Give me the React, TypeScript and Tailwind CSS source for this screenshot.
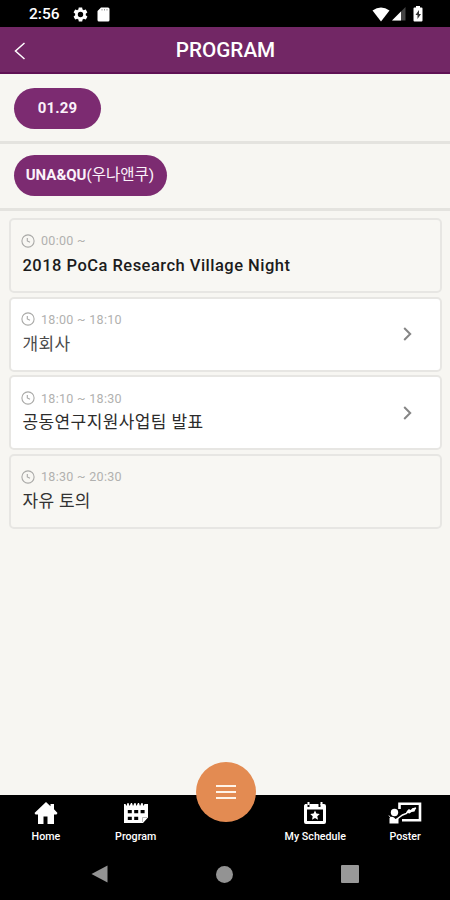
import React from 'react';

type Session = { time: string; title: string; link: boolean; tone: string; spacing: string };

const sessions: Session[] = [
  { time: '00:00 ~', title: '2018 PoCa Research Village Night', link: false, tone: 'text-[#1c1c1c] font-medium', spacing: 'pt-px text-[16.500px] tracking-[0.480px]' },
  { time: '18:00 ~ 18:10', title: '개회사', link: true, tone: 'text-[#4c4c4c]', spacing: 'text-[17px] tracking-[0.4px]' },
  { time: '18:10 ~ 18:30', title: '공동연구지원사업팀 발표', link: true, tone: 'text-[#2c2c2c]', spacing: 'text-[17px] tracking-[0.4px]' },
  { time: '18:30 ~ 20:30', title: '자유 토의', link: false, tone: 'text-[#333333]', spacing: 'text-[17px] tracking-[0.3px]' },
];

function StatusBar() {
  return (
    <div className="flex h-[27px] shrink-0 items-center bg-black pl-[29px] pr-[27px] pt-px text-white">
      <span className="w-[43px] pt-[2px] text-[15.5px] font-medium leading-none">2:56</span>
      <svg className="h-[17px] w-[17px]" viewBox="0 0 24 24" fill="currentColor">
        <path d="M19.4 13a7.5 7.5 0 0 0 0-2l2.1-1.7c.2-.1.3-.4.1-.6l-2-3.5c-.1-.2-.4-.3-.6-.2l-2.5 1a7.300 7.300 0 0 0-1.700-1l-.4-2.600c0-.3-.2-.4-.5-.4h-4c-.2 0-.4.1-.5.4L9 5c-.6.300-1.200.6-1.700 1L4.900 5c-.2-.1-.5 0-.6.2l-2 3.500c-.1.2-.1.5.1.6L4.500 11a7.500 7.500 0 0 0 0 2l-2.100 1.700c-.2.1-.2.4-.1.6l2 3.500c.1.2.4.3.6.2l2.500-1c.5.4 1.100.7 1.700 1l.4 2.600c0 .2.2.4.5.4h4c.2 0 .4-.2.5-.4l.4-2.600c.6-.3 1.200-.6 1.700-1l2.500 1c.2.1.5 0 .6-.2l2-3.500c.1-.2.1-.5-.1-.6L19.400 13ZM12 15.800a3.800 3.800 0 1 1 0-7.600 3.800 3.800 0 0 1 0 7.600Z" />
      </svg>
      <svg className="ml-[8px] h-[15px] w-[13px]" viewBox="0 0 13 15" fill="currentColor">
        <path d="M4 .5h7a1.500 1.500 0 0 1 1.500 1.500v11a1.500 1.500 0 0 1-1.500 1.500H2A1.500 1.500 0 0 1 .5 13V4Z" />
        <path d="M5 2v1.500M7.500 2v1.500M10 2v1.500" stroke="#999" strokeWidth="1" />
      </svg>
      <div className="ml-auto flex items-center">
        <svg className="h-[15px] w-[18px]" viewBox="0 0 18 15" fill="currentColor"><path d="M.5 3.500Q9-2.500 17.500 3.500L9 14.500Z" /></svg>
        <svg className="ml-[2px] h-[14px] w-[14px]" viewBox="0 0 14 14"><path d="M13.500 0V13.500H0Z" fill="#444" /><path d="M9 4.500V13.500H0Z" fill="#fff" /></svg>
        <svg className="ml-[7px] h-[16px] w-[10px]" viewBox="0 0 10 16"><path d="M3 0h4v1.500h1.500A1 1 0 0 1 9.500 2.500v12a1 1 0 0 1-1 1h-7a1 1 0 0 1-1-1v-12a1 1 0 0 1 1-1H3Z" fill="#fff" /><path d="M6 4 2.500 9h2v4L8 8H6Z" fill="#333" /></svg>
      </div>
    </div>
  );
}

function Clock() {
  return (
    <svg className="h-[14px] w-[14px] shrink-0" viewBox="0 0 14 14" fill="none" stroke="#a9a9a7" strokeWidth="1.1">
      <circle cx="7" cy="7" r="6.100" /><path d="M6.300 4v3l2.700 1.300" />
    </svg>
  );
}

function SessionCard({ time, title, link, tone, spacing }: Session) {
  return (
    <div className={`flex h-[75px] items-center rounded-[5px] border-2 border-[#e7e6e3] pl-[10px] pr-[28px] ${link ? 'bg-white' : 'bg-[#f8f7f3]'}`}>
      <div className="flex h-full flex-1 flex-col pt-[12px]">
        <div className="flex h-[17px] items-center gap-[6px] whitespace-nowrap text-[12.500px] leading-none tracking-[0.3px] text-[#b1b1af]"><Clock /><span className="pt-[2px]">{time}</span></div>
        <div className={`mt-[4px] whitespace-nowrap pl-[1.500px] leading-[24px] ${tone} ${spacing}`}>{title}</div>
      </div>
      {link && <svg className="h-[14px] w-[9px]" viewBox="0 0 9 14" fill="none" stroke="#858585" strokeWidth="2"><path d="m1.200 1 6 6-6 6" /></svg>}
    </div>
  );
}

function HomeIcon() {
  return <svg className="h-[24px] w-[24px]" viewBox="0 0 24 24" fill="#fff"><path d="M12 1 .5 12l1 1.500H4V23h5.500v-7.500h4V23H20v-9.500h2.500l1-1.500L20 8.300V3h-3.500v2.200Z" /></svg>;
}

function ProgramIcon() {
  return (
    <svg className="h-[24px] w-[26px]" viewBox="0 0 26 24">
      <path d="M1 3h1.500l1 2 1-3h1l1 3 1.500-3h1l1 3 1.500-3h1l1 3 1.500-3h1l1 3 1.500-3h1l1 3 1-2H25v13.500L20 22H1Z" fill="#fff" />
      <path d="M4.800 9h4v3.300h-4ZM11.200 9h4v3.300h-4ZM17.600 9h4v3.300h-4ZM4.800 15.700h4V19h-4ZM11.200 15.700h4V19h-4Z" fill="#000" />
      <path d="M19.500 21v-4.500H24" fill="none" stroke="#aaa" strokeWidth=".8" />
    </svg>
  );
}

function ScheduleIcon() {
  return (
    <svg className="h-[24px] w-[24px]" viewBox="0 0 24 24">
      <path d="M2 3h2.500v3h2V3h9v3h2V3H21a2 2 0 0 1 2 2v16a2 2 0 0 1-2 2H3a2 2 0 0 1-2-2V4.500Z" fill="#fff" />
      <path d="M4 8.500h16v11.500H4Z" fill="#000" />
      <path d="M5.500 1v3M18.500 1v3" stroke="#fff" strokeWidth="2" />
      <path d="m12 9.500 1.400 3.100 3.400.4-2.500 2.300.7 3.400-3-1.700L9 18.700l.7-3.400L7.200 13l3.400-.4Z" fill="#fff" />
    </svg>
  );
}

function PosterIcon() {
  return (
    <svg className="h-[24px] w-[34px]" viewBox="0 0 34 24" fill="none" stroke="#fff">
      <path d="M11.500 8V2.800h20.500v16.500H14" strokeWidth="2.600" />
      <circle cx="6.500" cy="11.500" r="3.700" fill="#fff" stroke="none" />
      <path d="M1.500 22.500V17q2-2 4.500-.5L7.500 18l3-1.500v6Z" fill="#fff" stroke="none" />
      <path d="m9 18 5.500-4 4-1.500 2.500-3.500 2 1 2-2 3-1" strokeWidth="1.500" />
      <path d="m18 11.500 2-2.500 3 .5 1-2 4-.5-1.500 3.500-3 .5-2 1.500Z" fill="#fff" stroke="none" />
      <path d="m1 14.500 2 2.500" strokeWidth="1" />
    </svg>
  );
}

function NavItem({ label, children }: { label: string; children: React.ReactNode }) {
  return (
    <div className="flex flex-1 flex-col items-center pt-[6px]">
      {children}
      <span className="mt-[6px] whitespace-nowrap text-[10.700px] font-medium leading-[12px] text-white">{label}</span>
    </div>
  );
}

export default function App() {
  return (
    <div className="flex h-[900px] w-[450px] flex-col overflow-hidden bg-[#f7f6f2] font-[Roboto,'Noto_Sans_CJK_KR',sans-serif]">
      <StatusBar />
      <header className="grid h-[47px] shrink-0 grid-cols-[48px_1fr_48px] items-center border-b-2 border-[#5f1154] bg-[#722765] text-white">
        <svg className="ml-[14px] mt-[2px] h-[18px] w-[12px]" viewBox="0 0 12 18" fill="none" stroke="#fff" strokeWidth="1.500"><path d="M10.500 1 1.500 9l9 8" /></svg>
        <h1 className="pl-px pt-[2px] text-center text-[20.700px] font-medium leading-none">PROGRAM</h1>
      </header>
      <div className="h-[70px] shrink-0 border-b-[3px] border-[#e4e3df] pl-[14px] pt-[14px]">
        <button className="block h-[41px] w-[87px] rounded-full bg-[#7c2b71] text-[15px] font-bold leading-none tracking-[0.100px] text-[#fbf2fa]">01.29</button>
      </div>
      <div className="h-[67px] shrink-0 border-b-[3px] border-[#e4e3df] pl-[14px] pt-[11px]">
        <button className="block h-[41px] w-[153px] whitespace-nowrap rounded-full bg-[#7c2b71] pr-px pt-px text-[15px] font-bold leading-none text-[#fbf2fa]">UNA&amp;QU<span className="text-[15.500px] font-normal">(우나앤쿠)</span></button>
      </div>
      <main className="flex flex-1 flex-col gap-[3.700px] pl-[9px] pr-[8px] pt-[7px]">
        {sessions.map((s) => <SessionCard key={s.time} {...s} />)}
      </main>
      <nav className="relative flex h-[55px] shrink-0 bg-black pl-px">
        <NavItem label="Home"><HomeIcon /></NavItem>
        <NavItem label="Program"><ProgramIcon /></NavItem>
        <div className="flex-1" />
        <NavItem label="My Schedule"><ScheduleIcon /></NavItem>
        <NavItem label="Poster"><PosterIcon /></NavItem>
        <button className="absolute left-[196px] top-[-33px] flex h-[60px] w-[60px] flex-col items-center justify-center gap-[4px] rounded-full bg-[#e38b52]">
          <span className="h-[2px] w-[20px] bg-[#fff4e8]" /><span className="h-[2px] w-[20px] bg-[#fff4e8]" /><span className="h-[2px] w-[20px] bg-[#fff4e8]" />
        </button>
      </nav>
      <div className="flex h-[50px] shrink-0 items-center justify-between bg-black pb-[2px] pl-[91px] pr-[91px]">
        <svg className="h-[18px] w-[17px]" viewBox="0 0 17 18"><path d="M16.500.5v17L.5 9Z" fill="#939393" /></svg>
        <span className="h-[17px] w-[17px] rounded-full bg-[#939393]" />
        <span className="h-[18px] w-[18px] rounded-[1px] bg-[#999]" />
      </div>
    </div>
  );
}
